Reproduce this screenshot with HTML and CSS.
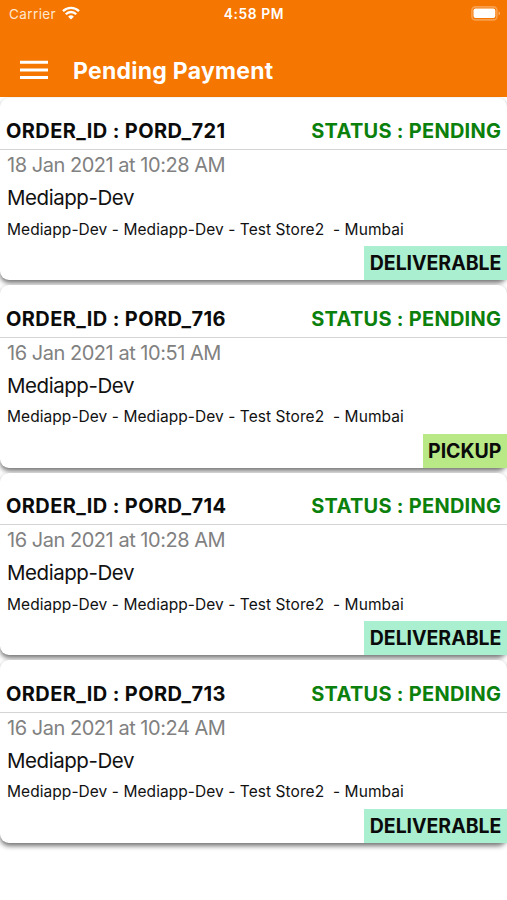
FILE: index.html
```html
<!DOCTYPE html>
<html lang="en">
<head>
<meta charset="utf-8">
<title>Pending Payment</title>
<link rel="stylesheet" href="styles.css">
</head>
<body>
<header class="header">
  <div class="statusbar">
    <div class="carrier"><span>Carrier</span>
      <svg class="wifi" width="18" height="14" viewBox="0 0 18 14" fill="none" stroke="#fff" stroke-width="2.3"><path d="M1 5.1a11.3 11.3 0 0 1 16 0M3.8 8.2a7.3 7.3 0 0 1 10.4 0"/><path d="M9 13.6 6.1 10.7a4.1 4.1 0 0 1 5.8 0z" fill="#fff" stroke="none"/></svg>
    </div>
    <div class="clock">4:58 PM</div>
    <svg class="battery" width="30" height="15" viewBox="0 0 30 15"><rect x=".9" y=".9" width="25" height="13" rx="3.5" fill="none" stroke="#fff" stroke-opacity=".3" stroke-width="1.6"/><rect x="2.5" y="2.5" width="21.8" height="9.5" rx="2" fill="#fff"/><path d="M27.6 5.3v4.2c1.9-.8 1.9-3.4 0-4.2z" fill="#fff" fill-opacity=".45"/></svg>
  </div>
  <div class="titlebar">
    <svg class="menu" width="28" height="20" viewBox="0 0 28 20" fill="#fff"><path d="M0 .7h28v3H0zM0 8.4h28v3H0zM0 16.1h28v3H0z"/></svg>
    <h1 class="title">Pending Payment</h1>
  </div>
</header>
<main class="orders">
  <article class="card">
    <div class="card-head"><span class="order-id">ORDER_ID : PORD_721</span><span class="status">STATUS : PENDING</span></div>
    <div class="date">18 Jan 2021 at 10:28 AM</div>
    <div class="customer">Mediapp-Dev</div>
    <div class="store">Mediapp-Dev - Mediapp-Dev - Test Store2  - Mumbai</div>
    <div class="tag deliverable">DELIVERABLE</div>
  </article>
  <article class="card">
    <div class="card-head"><span class="order-id">ORDER_ID : PORD_716</span><span class="status">STATUS : PENDING</span></div>
    <div class="date">16 Jan 2021 at 10:51 AM</div>
    <div class="customer">Mediapp-Dev</div>
    <div class="store">Mediapp-Dev - Mediapp-Dev - Test Store2  - Mumbai</div>
    <div class="tag pickup">PICKUP</div>
  </article>
  <article class="card">
    <div class="card-head"><span class="order-id">ORDER_ID : PORD_714</span><span class="status">STATUS : PENDING</span></div>
    <div class="date">16 Jan 2021 at 10:28 AM</div>
    <div class="customer">Mediapp-Dev</div>
    <div class="store">Mediapp-Dev - Mediapp-Dev - Test Store2  - Mumbai</div>
    <div class="tag deliverable">DELIVERABLE</div>
  </article>
  <article class="card">
    <div class="card-head"><span class="order-id">ORDER_ID : PORD_713</span><span class="status">STATUS : PENDING</span></div>
    <div class="date">16 Jan 2021 at 10:24 AM</div>
    <div class="customer">Mediapp-Dev</div>
    <div class="store">Mediapp-Dev - Mediapp-Dev - Test Store2  - Mumbai</div>
    <div class="tag deliverable">DELIVERABLE</div>
  </article>
</main>
</body>
</html>
```
FILE: styles.css
```css
* { box-sizing: border-box; }
body { margin: 0; height: 900px; overflow: hidden; background: #fff; color: #111; font-family: Inter, "Liberation Sans", sans-serif; white-space: nowrap; }
.header { height: 97px; background: #f57600; color: #fff; }
.statusbar { display: grid; grid-template-columns: 1fr auto 1fr; align-items: center; height: 27px; padding: 0 6px 0 9px; font-size: 13.5px; }
.carrier { display: flex; align-items: center; gap: 6px; color: #ffe6cf; letter-spacing: .4px; }
.wifi { margin: -2px 0 0 -.5px; }
.clock { margin-left: -2px; font-size: 13.8px; font-weight: 600; letter-spacing: .6px; }
.battery { justify-self: end; margin-top: -1px; }
.titlebar { display: flex; align-items: center; height: 70px; padding: 17px 0 0 20px; gap: 25px; }
.menu { margin-top: -1px; }
.title { margin: 0; font-size: 23px; font-weight: 700; line-height: 28px; letter-spacing: .26px; }
.orders { display: flex; flex-direction: column; gap: 5px; padding-top: .5px; }
.card { display: flex; flex-direction: column; height: 182.5px; background: #fff; border-radius: 9px; box-shadow: 0 3px 5px rgba(0, 0, 0, .55); }
.card-head { display: flex; justify-content: space-between; height: 52.6px; padding: 20.5px 6px 0; border-bottom: 1.5px solid #d4d4d4; font-size: 20px; font-weight: 700; line-height: 27px; }
.order-id { color: #0b0b0b; letter-spacing: .38px; }
.status { color: #0c800c; letter-spacing: .27px; margin-right: -.3px; }
.date { padding-left: 7px; color: #818181; font-size: 20px; line-height: 31px; letter-spacing: -.47px; }
.customer { padding-left: 7px; font-size: 20.5px; line-height: 34.4px; letter-spacing: -.45px; }
.store { padding-left: 7px; font-size: 15.5px; line-height: 27px; letter-spacing: .06px; white-space: pre; }
.tag { align-self: flex-end; margin-top: auto; height: 34px; padding: 0 5.7px 0 5.5px; color: #0b0b0b; font-size: 19.5px; font-weight: 700; line-height: 35px; letter-spacing: -.04px; }
.deliverable { background: #abefd1; }
.pickup { background: #b8e986; }
```
